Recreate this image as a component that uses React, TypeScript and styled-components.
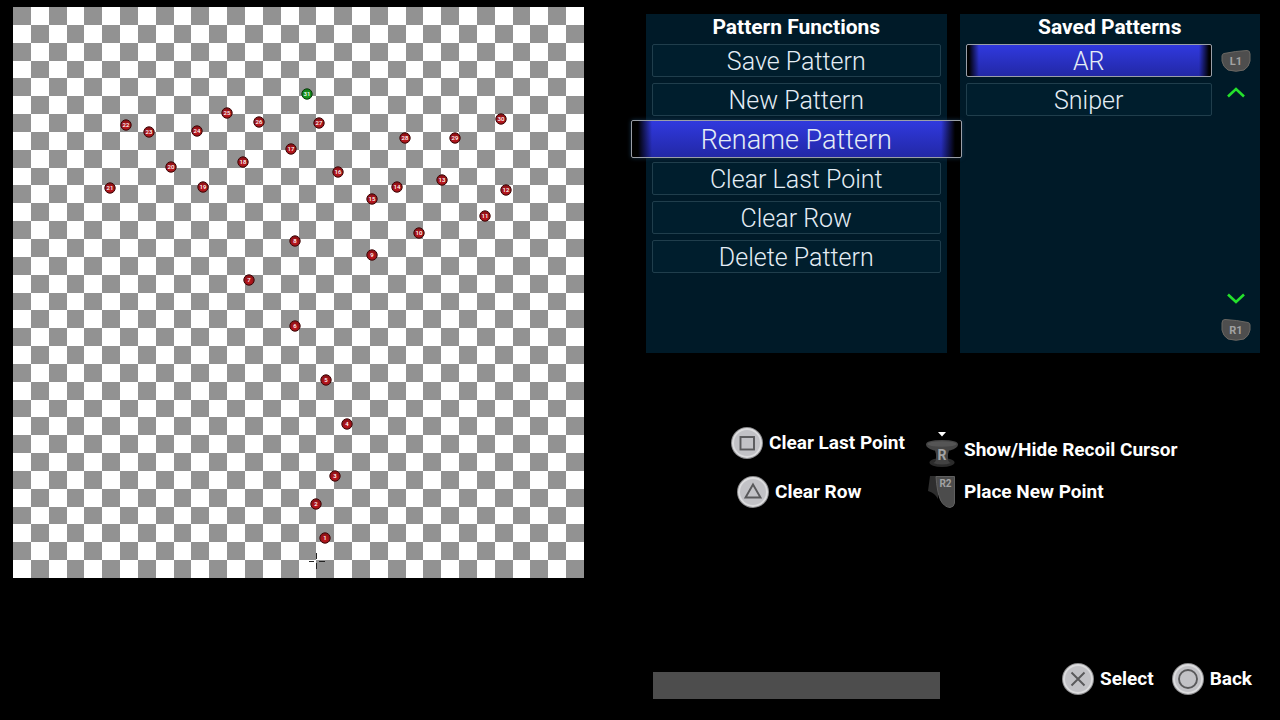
import React from "react";
import styled, { createGlobalStyle, css } from "styled-components";

const GlobalStyle = createGlobalStyle`
  *, *::before, *::after { box-sizing: border-box; }
  body {
    margin: 0;
    background: #000;
    color: #fff;
    font-family: Roboto, "Liberation Sans", sans-serif;
  }
`;

const Page = styled.main`
  display: grid;
  grid-template-columns: minmax(0, 571fr) minmax(0, 614fr);
  column-gap: 62px;
  min-height: 100vh;
  padding: 7px 20px 21px 13px;
`;

const Board = styled.svg`
  display: block;
  width: 100%;
  height: auto;
  background: #fff;
`;

const MarkerLabel = styled.text`
  fill: #fff;
  font-family: Roboto, "Liberation Sans", sans-serif;
  font-size: 6px;
  font-weight: 500;
  text-anchor: middle;
`;

const Side = styled.div`
  display: flex;
  flex-direction: column;
  padding-top: 7px;
`;

const Columns = styled.div`
  display: grid;
  grid-template-columns: repeat(2, minmax(0, 1fr));
  column-gap: 13px;
`;

const Panel = styled.section`
  min-height: 339px;
  padding: 0 6px 6px;
  background: #001a28;
  display: flex;
  flex-direction: column;
`;

const PanelTitle = styled.h2`
  margin: 0;
  height: 30px;
  font-size: 21px;
  line-height: 27px;
  font-weight: 700;
  text-align: center;
`;

const MenuList = styled.div`
  display: grid;
  row-gap: 6px;
  align-content: start;
`;

const glow = (dark: number, fade: number) => css`
  border-color: #9a9fa8;
  background:
    linear-gradient(90deg, #000 ${dark}px, transparent ${fade}px, transparent calc(100% - ${fade}px), #000 calc(100% - ${dark}px)),
    linear-gradient(180deg, #3039de, #2228a6);
`;

const MenuButton = styled.button<{ $active?: boolean; $enlarged?: boolean }>`
  position: relative;
  height: 33px;
  padding: 2px 0 0;
  border: 1px solid #203e4c;
  border-radius: 2px;
  background: #001e2d;
  color: #e4edf5;
  font-family: Roboto, "Liberation Sans", sans-serif;
  font-size: 25px;
  line-height: 29px;
  font-weight: 300;
  white-space: nowrap;
  ${({ $active }) => $active && glow(2, 12)}
  ${({ $enlarged }) =>
    $enlarged &&
    css`
      ${glow(6, 20)}
      height: 38px;
      margin: -2px -21px;
      font-size: 27px;
      line-height: 34px;
      box-shadow: 0 0 4px #16324a;
    `}
`;

const SavedBody = styled.div`
  flex: 1;
  display: grid;
  grid-template-columns: minmax(0, 1fr) 36px;
  column-gap: 6px;
`;

const Pager = styled.div`
  display: flex;
  flex-direction: column;
  justify-content: space-between;
`;

const PagerButton = styled.button`
  display: flex;
  flex-direction: column;
  align-items: center;
  gap: 15px;
  padding: 6px 0;
  border: 0;
  background: none;
`;

const Icon = styled.svg`
  display: block;
  flex: none;
  overflow: visible;
`;

const KeyText = styled.text<{ $size: number }>`
  fill: #a2a2a2;
  font-family: Roboto, "Liberation Sans", sans-serif;
  font-size: ${({ $size }) => $size}px;
  font-weight: 700;
  text-anchor: middle;
`;

const Hints = styled.div`
  display: grid;
  grid-template-columns: 195px 1fr;
  grid-template-rows: 48px 36px;
  align-items: start;
  margin: 73px 0 24px 85px;
`;

const Prompt = styled.button<{ $height?: number; $indent?: number }>`
  display: flex;
  align-items: center;
  gap: 6px;
  height: ${({ $height }) => $height ?? 34}px;
  padding: 0 0 0 ${({ $indent }) => $indent ?? 0}px;
  border: 0;
  background: none;
  color: #fff;
  font-family: Roboto, "Liberation Sans", sans-serif;
  font-size: 19px;
  line-height: 24px;
  font-weight: 700;
  white-space: nowrap;
`;

const Footer = styled(Columns)`
  align-items: end;
  margin-top: auto;
`;

const NameField = styled.input`
  height: 27px;
  min-width: 0;
  margin: 0 7px;
  padding: 0 6px;
  border: 0;
  background: #4d4d4d;
  color: #fff;
  font-family: Roboto, "Liberation Sans", sans-serif;
  font-size: 16px;
`;

const Actions = styled.div`
  display: flex;
  justify-content: flex-end;
  gap: 18px;
  padding: 0 8px 3px 0;
`;

const CELLS = 32;
const BOARD = 571;
const CELL = BOARD / CELLS;

const points: [number, number][] = [
  [312, 531], [303, 497], [322, 469], [334, 417], [313, 373], [282, 319],
  [236, 273], [282, 234], [359, 248], [406, 226], [472, 209], [493, 183],
  [429, 173], [384, 180], [359, 192], [325, 165], [278, 142], [230, 155],
  [190, 180], [158, 160], [97, 181], [113, 118], [136, 125], [184, 124],
  [214, 106], [246, 115], [306, 116], [392, 131], [442, 131], [488, 112],
  [294, 87],
];

const darkCells = Array.from({ length: CELLS }, (_, row) =>
  Array.from({ length: CELLS / 2 }, (_, i) => {
    const col = i * 2 + (row % 2);
    const x = Math.round(col * CELL);
    const y = Math.round(row * CELL);
    return `M${x} ${y}H${Math.round((col + 1) * CELL)}V${Math.round((row + 1) * CELL)}H${x}Z`;
  }).join("")
).join("");

function PatternBoard() {
  return (
    <Board viewBox={`0 0 ${BOARD} ${BOARD}`} role="img" aria-label="Recoil pattern">
      <defs>
        <radialGradient id="red" cx="50%" cy="65%" r="60%">
          <stop offset="0" stopColor="#c2181e" />
          <stop offset="1" stopColor="#8a1015" />
        </radialGradient>
        <radialGradient id="green" cx="50%" cy="65%" r="60%">
          <stop offset="0" stopColor="#1ba023" />
          <stop offset="1" stopColor="#0c7e14" />
        </radialGradient>
      </defs>
      <path d={darkCells} fill="#929292" shapeRendering="crispEdges" />
      {points.map(([x, y], i) => (
        <g key={i}>
          <circle
            cx={x}
            cy={y}
            r="5.2"
            fill={i === points.length - 1 ? "url(#green)" : "url(#red)"}
            stroke={i === points.length - 1 ? "#0a3a0c" : "#3c0808"}
          />
          <MarkerLabel x={x} y={y + 2}>{i + 1}</MarkerLabel>
        </g>
      ))}
      <path d="M303.5 546v6M303.5 556v6M296 554.5h5M306 554.5h6" stroke="#222" fill="none" />
    </Board>
  );
}

const shapes = {
  square: <rect x="9.5" y="10" width="13.5" height="12.5" />,
  triangle: <path d="M16 8.5L23.5 21.5H8.5Z" />,
  cross: <path d="M9.5 9.5L22.5 22.5M22.5 9.5L9.5 22.5" />,
  circle: <circle cx="16" cy="16" r="9" />,
};

function PadIcon({ shape }: { shape: keyof typeof shapes }) {
  return (
    <Icon width="32" height="32" viewBox="0 0 32 32" aria-hidden="true">
      <circle cx="16" cy="16" r="16" fill="#8b8b8d" />
      <circle cx="16" cy="16" r="15" fill="#dcdcde" />
      <circle cx="16" cy="16" r="13" fill="#c2c2c6" />
      <g fill="none" stroke="#59595b" strokeWidth="1.9">{shapes[shape]}</g>
    </Icon>
  );
}

function StickIcon() {
  return (
    <Icon width="32" height="38" viewBox="0 0 32 38" aria-hidden="true">
      <path d="M12 1H20L16 5.500Z" fill="#fff" />
      <ellipse cx="16" cy="31.500" rx="12.500" ry="4.500" fill="#2b2b2b" />
      <path d="M8 16H24L22 23V28Q22 31 25 32Q16 35 7 32Q10 31 10 28V23Z" fill="#424242" />
      <path d="M0 13.500Q0 9 16 9T32 13.500Q32 17 24 19.500H8Q0 17 0 13.500Z" fill="#454545" />
      <ellipse cx="16" cy="13" rx="14.500" ry="2.800" fill="#555" />
      <KeyText $size={14} x="16" y="29">R</KeyText>
    </Icon>
  );
}

function TriggerIcon() {
  return (
    <Icon width="32" height="34" viewBox="0 0 32 34" aria-hidden="true">
      <path d="M4 1H12V24Q9 18 2 16Z" fill="#2e2e2e" />
      <path d="M10 1.500H28.500V28Q28 32 24 32.500Q18 32 14.500 25Q11 17 10 1.500Z" fill="#4c4c4c" stroke="#606060" />
      <KeyText $size={10} x="19.500" y="12">R2</KeyText>
    </Icon>
  );
}

function ShoulderIcon({ side }: { side: "L1" | "R1" }) {
  return (
    <Icon width="30" height="22" viewBox="0 0 30 22" aria-hidden="true">
      <path
        d="M3 3.500Q15 1 26 .500Q29 .500 29 4V11Q28 17 23 20Q15 22.500 7 20Q2 17 1 11V6Q1 4 3 3.500Z"
        transform={side === "R1" ? "translate(30 0) scale(-1 1)" : undefined}
        fill="#4e4e4e"
        stroke="#6b6863"
      />
      <KeyText $size={11} x="15" y="15">{side}</KeyText>
    </Icon>
  );
}

function Chevron({ up }: { up?: boolean }) {
  return (
    <Icon width="18" height="11" viewBox="0 0 18 11" aria-hidden="true">
      <path d={up ? "M1 9.500L9 2L17 9.500" : "M1 1.500L9 9L17 1.500"} fill="none" stroke="#24e02c" strokeWidth="2.600" />
    </Icon>
  );
}

const functions = [
  "Save Pattern",
  "New Pattern",
  "Rename Pattern",
  "Clear Last Point",
  "Clear Row",
  "Delete Pattern",
];

export default function App() {
  return (
    <>
      <GlobalStyle />
      <Page>
        <PatternBoard />
        <Side>
          <Columns>
            <Panel>
              <PanelTitle>Pattern Functions</PanelTitle>
              <MenuList>
                {functions.map((name) => {
                  const active = name === "Rename Pattern";
                  return (
                    <MenuButton key={name} type="button" $active={active} $enlarged={active}>
                      {name}
                    </MenuButton>
                  );
                })}
              </MenuList>
            </Panel>
            <Panel>
              <PanelTitle>Saved Patterns</PanelTitle>
              <SavedBody>
                <MenuList>
                  <MenuButton type="button" $active>AR</MenuButton>
                  <MenuButton type="button">Sniper</MenuButton>
                </MenuList>
                <Pager>
                  <PagerButton type="button" aria-label="Previous pattern">
                    <ShoulderIcon side="L1" />
                    <Chevron up />
                  </PagerButton>
                  <PagerButton type="button" aria-label="Next pattern">
                    <Chevron />
                    <ShoulderIcon side="R1" />
                  </PagerButton>
                </Pager>
              </SavedBody>
            </Panel>
          </Columns>
          <Hints>
            <Prompt type="button"><PadIcon shape="square" />Clear Last Point</Prompt>
            <Prompt type="button" $height={48}><StickIcon />Show/Hide Recoil Cursor</Prompt>
            <Prompt type="button" $height={36} $indent={6}><PadIcon shape="triangle" />Clear Row</Prompt>
            <Prompt type="button" $height={36}><TriggerIcon />Place New Point</Prompt>
          </Hints>
          <Footer>
            <NameField type="text" aria-label="Pattern name" />
            <Actions>
              <Prompt type="button"><PadIcon shape="cross" />Select</Prompt>
              <Prompt type="button"><PadIcon shape="circle" />Back</Prompt>
            </Actions>
          </Footer>
        </Side>
      </Page>
    </>
  );
}
